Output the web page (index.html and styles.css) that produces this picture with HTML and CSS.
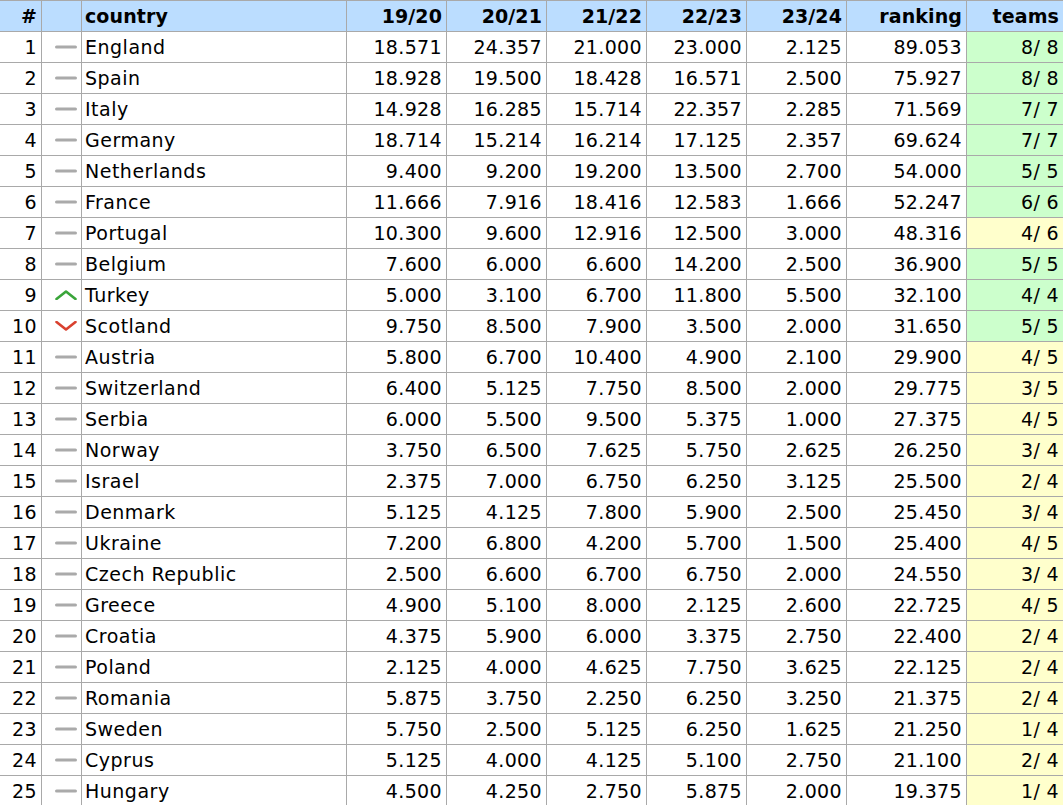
FILE: index.html
```html
<!DOCTYPE html>
<html lang="en">
<head>
<meta charset="utf-8">
<title>Country ranking</title>
<link rel="stylesheet" href="styles.css">
</head>
<body>
<table class="ranking">
<thead>
<tr>
<th class="num">#</th><th class="ic"></th><th class="name">country</th>
<th>19/20</th><th>20/21</th><th>21/22</th><th>22/23</th><th>23/24</th><th>ranking</th><th class="teams">teams</th>
</tr>
</thead>
<tbody id="rows"></tbody>
</table>
<script src="script.js"></script>
</body>
</html>
```
FILE: script.js
```js
const data = [
["England","18.571","24.357","21.000","23.000","2.125","89.053","8/ 8","g","s"],
["Spain","18.928","19.500","18.428","16.571","2.500","75.927","8/ 8","g","s"],
["Italy","14.928","16.285","15.714","22.357","2.285","71.569","7/ 7","g","s"],
["Germany","18.714","15.214","16.214","17.125","2.357","69.624","7/ 7","g","s"],
["Netherlands","9.400","9.200","19.200","13.500","2.700","54.000","5/ 5","g","s"],
["France","11.666","7.916","18.416","12.583","1.666","52.247","6/ 6","g","s"],
["Portugal","10.300","9.600","12.916","12.500","3.000","48.316","4/ 6","y","s"],
["Belgium","7.600","6.000","6.600","14.200","2.500","36.900","5/ 5","g","s"],
["Turkey","5.000","3.100","6.700","11.800","5.500","32.100","4/ 4","g","u"],
["Scotland","9.750","8.500","7.900","3.500","2.000","31.650","5/ 5","g","d"],
["Austria","5.800","6.700","10.400","4.900","2.100","29.900","4/ 5","y","s"],
["Switzerland","6.400","5.125","7.750","8.500","2.000","29.775","3/ 5","y","s"],
["Serbia","6.000","5.500","9.500","5.375","1.000","27.375","4/ 5","y","s"],
["Norway","3.750","6.500","7.625","5.750","2.625","26.250","3/ 4","y","s"],
["Israel","2.375","7.000","6.750","6.250","3.125","25.500","2/ 4","y","s"],
["Denmark","5.125","4.125","7.800","5.900","2.500","25.450","3/ 4","y","s"],
["Ukraine","7.200","6.800","4.200","5.700","1.500","25.400","4/ 5","y","s"],
["Czech Republic","2.500","6.600","6.700","6.750","2.000","24.550","3/ 4","y","s"],
["Greece","4.900","5.100","8.000","2.125","2.600","22.725","4/ 5","y","s"],
["Croatia","4.375","5.900","6.000","3.375","2.750","22.400","2/ 4","y","s"],
["Poland","2.125","4.000","4.625","7.750","3.625","22.125","2/ 4","y","s"],
["Romania","5.875","3.750","2.250","6.250","3.250","21.375","2/ 4","y","s"],
["Sweden","5.750","2.500","5.125","6.250","1.625","21.250","1/ 4","y","s"],
["Cyprus","5.125","4.000","4.125","5.100","2.750","21.100","2/ 4","y","s"],
["Hungary","4.500","4.250","2.750","5.875","2.000","19.375","1/ 4","y","s"]
];
const icons = {
  s: '<svg class="trend" width="24" height="10" viewBox="0 0 24 10"><line x1="2.5" y1="5" x2="21.5" y2="5" stroke="#aaaaaa" stroke-width="3" stroke-linecap="round"/></svg>',
  u: '<svg class="trend" width="24" height="10" viewBox="0 0 24 10"><polyline points="2.5,9 12,1.5 21.5,9" fill="none" stroke="#3aa53a" stroke-width="2.6" stroke-linecap="round" stroke-linejoin="round"/></svg>',
  d: '<svg class="trend" width="24" height="10" viewBox="0 0 24 10"><polyline points="2.5,1 12,8.5 21.5,1" fill="none" stroke="#d9412f" stroke-width="2.6" stroke-linecap="round" stroke-linejoin="round"/></svg>'
};
const tbody = document.getElementById('rows');
tbody.innerHTML = data.map((r, i) => {
  const cls = r[8] === 'g' ? 'full' : 'partial';
  return '<tr><td class="num">' + (i + 1) + '</td><td class="ic">' + icons[r[9]] +
    '</td><td class="name">' + r[0] + '</td>' +
    r.slice(1, 7).map(v => '<td>' + v + '</td>').join('') +
    '<td class="teams ' + cls + '">' + r[7] + '</td></tr>';
}).join('');
```
FILE: styles.css
```css
html, body {
  margin: 0;
  padding: 0;
  background: #ffffff;
  overflow: hidden;
}
.ranking {
  display: grid;
  grid-template-columns: 42px 40px 265px repeat(5, 100px) 120px 96px;
  border-spacing: 0;
  font-family: "DejaVu Sans", Verdana, sans-serif;
  font-size: 19px;
  letter-spacing: 0.35px;
  color: #000;
}
.ranking thead,
.ranking tbody,
.ranking tr {
  display: contents;
}
.ranking th,
.ranking td {
  display: block;
  box-sizing: border-box;
  height: 31px;
  line-height: 30px;
  padding: 0 4px 0 3px;
  text-align: right;
  border-right: 1px solid #a9a9a9;
  border-bottom: 1px solid #a9a9a9;
  white-space: nowrap;
  overflow: hidden;
}
.ranking th {
  height: 32px;
  border-top: 1px solid #a9a9a9;
  background: #bbddff;
  font-weight: bold;
  letter-spacing: 0.1px;
}
.ranking td.name {
  text-align: left;
  letter-spacing: 0.5px;
}
.ranking th.name {
  text-align: left;
}
.ranking .ic {
  padding: 0 3px 0 0;
  display: flex;
  align-items: center;
  justify-content: flex-end;
}
.ranking .teams {
  border-right: none;
}
.ranking td.full {
  background: #ccffcc;
}
.ranking td.partial {
  background: #ffffcc;
}
.trend {
  display: block;
}
```
